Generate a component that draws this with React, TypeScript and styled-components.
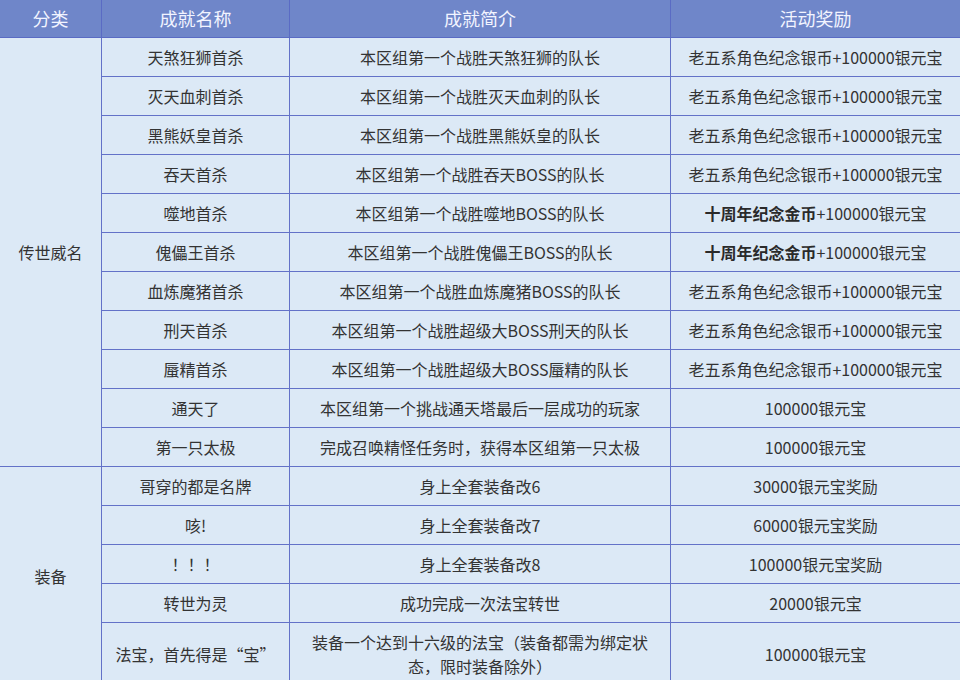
import styled, { createGlobalStyle } from 'styled-components';

const GlobalStyle = createGlobalStyle`
  html, body {
    margin: 0;
    padding: 0;
    overflow: hidden;
    background: #ffffff;
  }
  body {
    font-family: "Noto Sans CJK SC", "Noto Sans", sans-serif;
  }
`;

const Table = styled.table`
  width: 961px;
  table-layout: fixed;
  border-collapse: separate;
  border-spacing: 0;
  font-size: 16px;
  color: #333333;
`;

const HeadCell = styled.th`
  box-sizing: border-box;
  background: #6f86c9;
  color: #f2f4ff;
  font-weight: normal;
  font-size: 18px;
  line-height: 25px;
  padding: 6px 10px;
  text-align: center;
  border-right: 1px solid #5a6bc4;
  border-bottom: 1px solid #5a6bc4;
`;

const Cell = styled.td<{ $wide?: boolean }>`
  box-sizing: border-box;
  background: #dce9f6;
  line-height: 24px;
  padding: ${(p) => (p.$wide ? '7px 18px' : '7px 6px')};
  text-align: center;
  vertical-align: middle;
  border-right: 1px solid #6372c8;
  border-bottom: 1px solid #6372c8;
  white-space: ${(p) => (p.$wide ? 'normal' : 'nowrap')};
`;

const Strong = styled.b`
  font-weight: bold;
  color: #2a2a2a;
`;

type Row = { name: string; desc: string; reward: 'silver' | 'gold' | string };

const legend: Row[] = [
  { name: '天煞狂狮首杀', desc: '本区组第一个战胜天煞狂狮的队长', reward: 'silver' },
  { name: '灭天血刺首杀', desc: '本区组第一个战胜灭天血刺的队长', reward: 'silver' },
  { name: '黑熊妖皇首杀', desc: '本区组第一个战胜黑熊妖皇的队长', reward: 'silver' },
  { name: '吞天首杀', desc: '本区组第一个战胜吞天BOSS的队长', reward: 'silver' },
  { name: '噬地首杀', desc: '本区组第一个战胜噬地BOSS的队长', reward: 'gold' },
  { name: '傀儡王首杀', desc: '本区组第一个战胜傀儡王BOSS的队长', reward: 'gold' },
  { name: '血炼魔猪首杀', desc: '本区组第一个战胜血炼魔猪BOSS的队长', reward: 'silver' },
  { name: '刑天首杀', desc: '本区组第一个战胜超级大BOSS刑天的队长', reward: 'silver' },
  { name: '蜃精首杀', desc: '本区组第一个战胜超级大BOSS蜃精的队长', reward: 'silver' },
  { name: '通天了', desc: '本区组第一个挑战通天塔最后一层成功的玩家', reward: '100000银元宝' },
  { name: '第一只太极', desc: '完成召唤精怪任务时，获得本区组第一只太极', reward: '100000银元宝' },
];

const gear: Row[] = [
  { name: '哥穿的都是名牌', desc: '身上全套装备改6', reward: '30000银元宝奖励' },
  { name: '咳!', desc: '身上全套装备改7', reward: '60000银元宝奖励' },
  { name: '！！！', desc: '身上全套装备改8', reward: '100000银元宝奖励' },
  { name: '转世为灵', desc: '成功完成一次法宝转世', reward: '20000银元宝' },
  {
    name: '法宝，首先得是“宝”',
    desc: '装备一个达到十六级的法宝（装备都需为绑定状态，限时装备除外）',
    reward: '100000银元宝',
  },
];

const Reward = ({ kind }: { kind: string }) => {
  if (kind === 'silver') return <>老五系角色纪念银币+100000银元宝</>;
  if (kind === 'gold')
    return (
      <>
        <Strong>十周年纪念金币</Strong>+100000银元宝
      </>
    );
  return <>{kind}</>;
};

const Group = ({ title, rows }: { title: string; rows: Row[] }) => (
  <>
    {rows.map((r, i) => (
      <tr key={r.name}>
        {i === 0 && <Cell rowSpan={rows.length}>{title}</Cell>}
        <Cell>{r.name}</Cell>
        <Cell $wide>{r.desc}</Cell>
        <Cell>
          <Reward kind={r.reward} />
        </Cell>
      </tr>
    ))}
  </>
);

export default function App() {
  return (
    <>
      <GlobalStyle />
      <Table>
        <colgroup>
          <col style={{ width: 102 }} />
          <col style={{ width: 188 }} />
          <col style={{ width: 381 }} />
          <col style={{ width: 290 }} />
        </colgroup>
        <thead>
          <tr>
            <HeadCell>分类</HeadCell>
            <HeadCell>成就名称</HeadCell>
            <HeadCell>成就简介</HeadCell>
            <HeadCell>活动奖励</HeadCell>
          </tr>
        </thead>
        <tbody>
          <Group title="传世威名" rows={legend} />
          <Group title="装备" rows={gear} />
        </tbody>
      </Table>
    </>
  );
}
